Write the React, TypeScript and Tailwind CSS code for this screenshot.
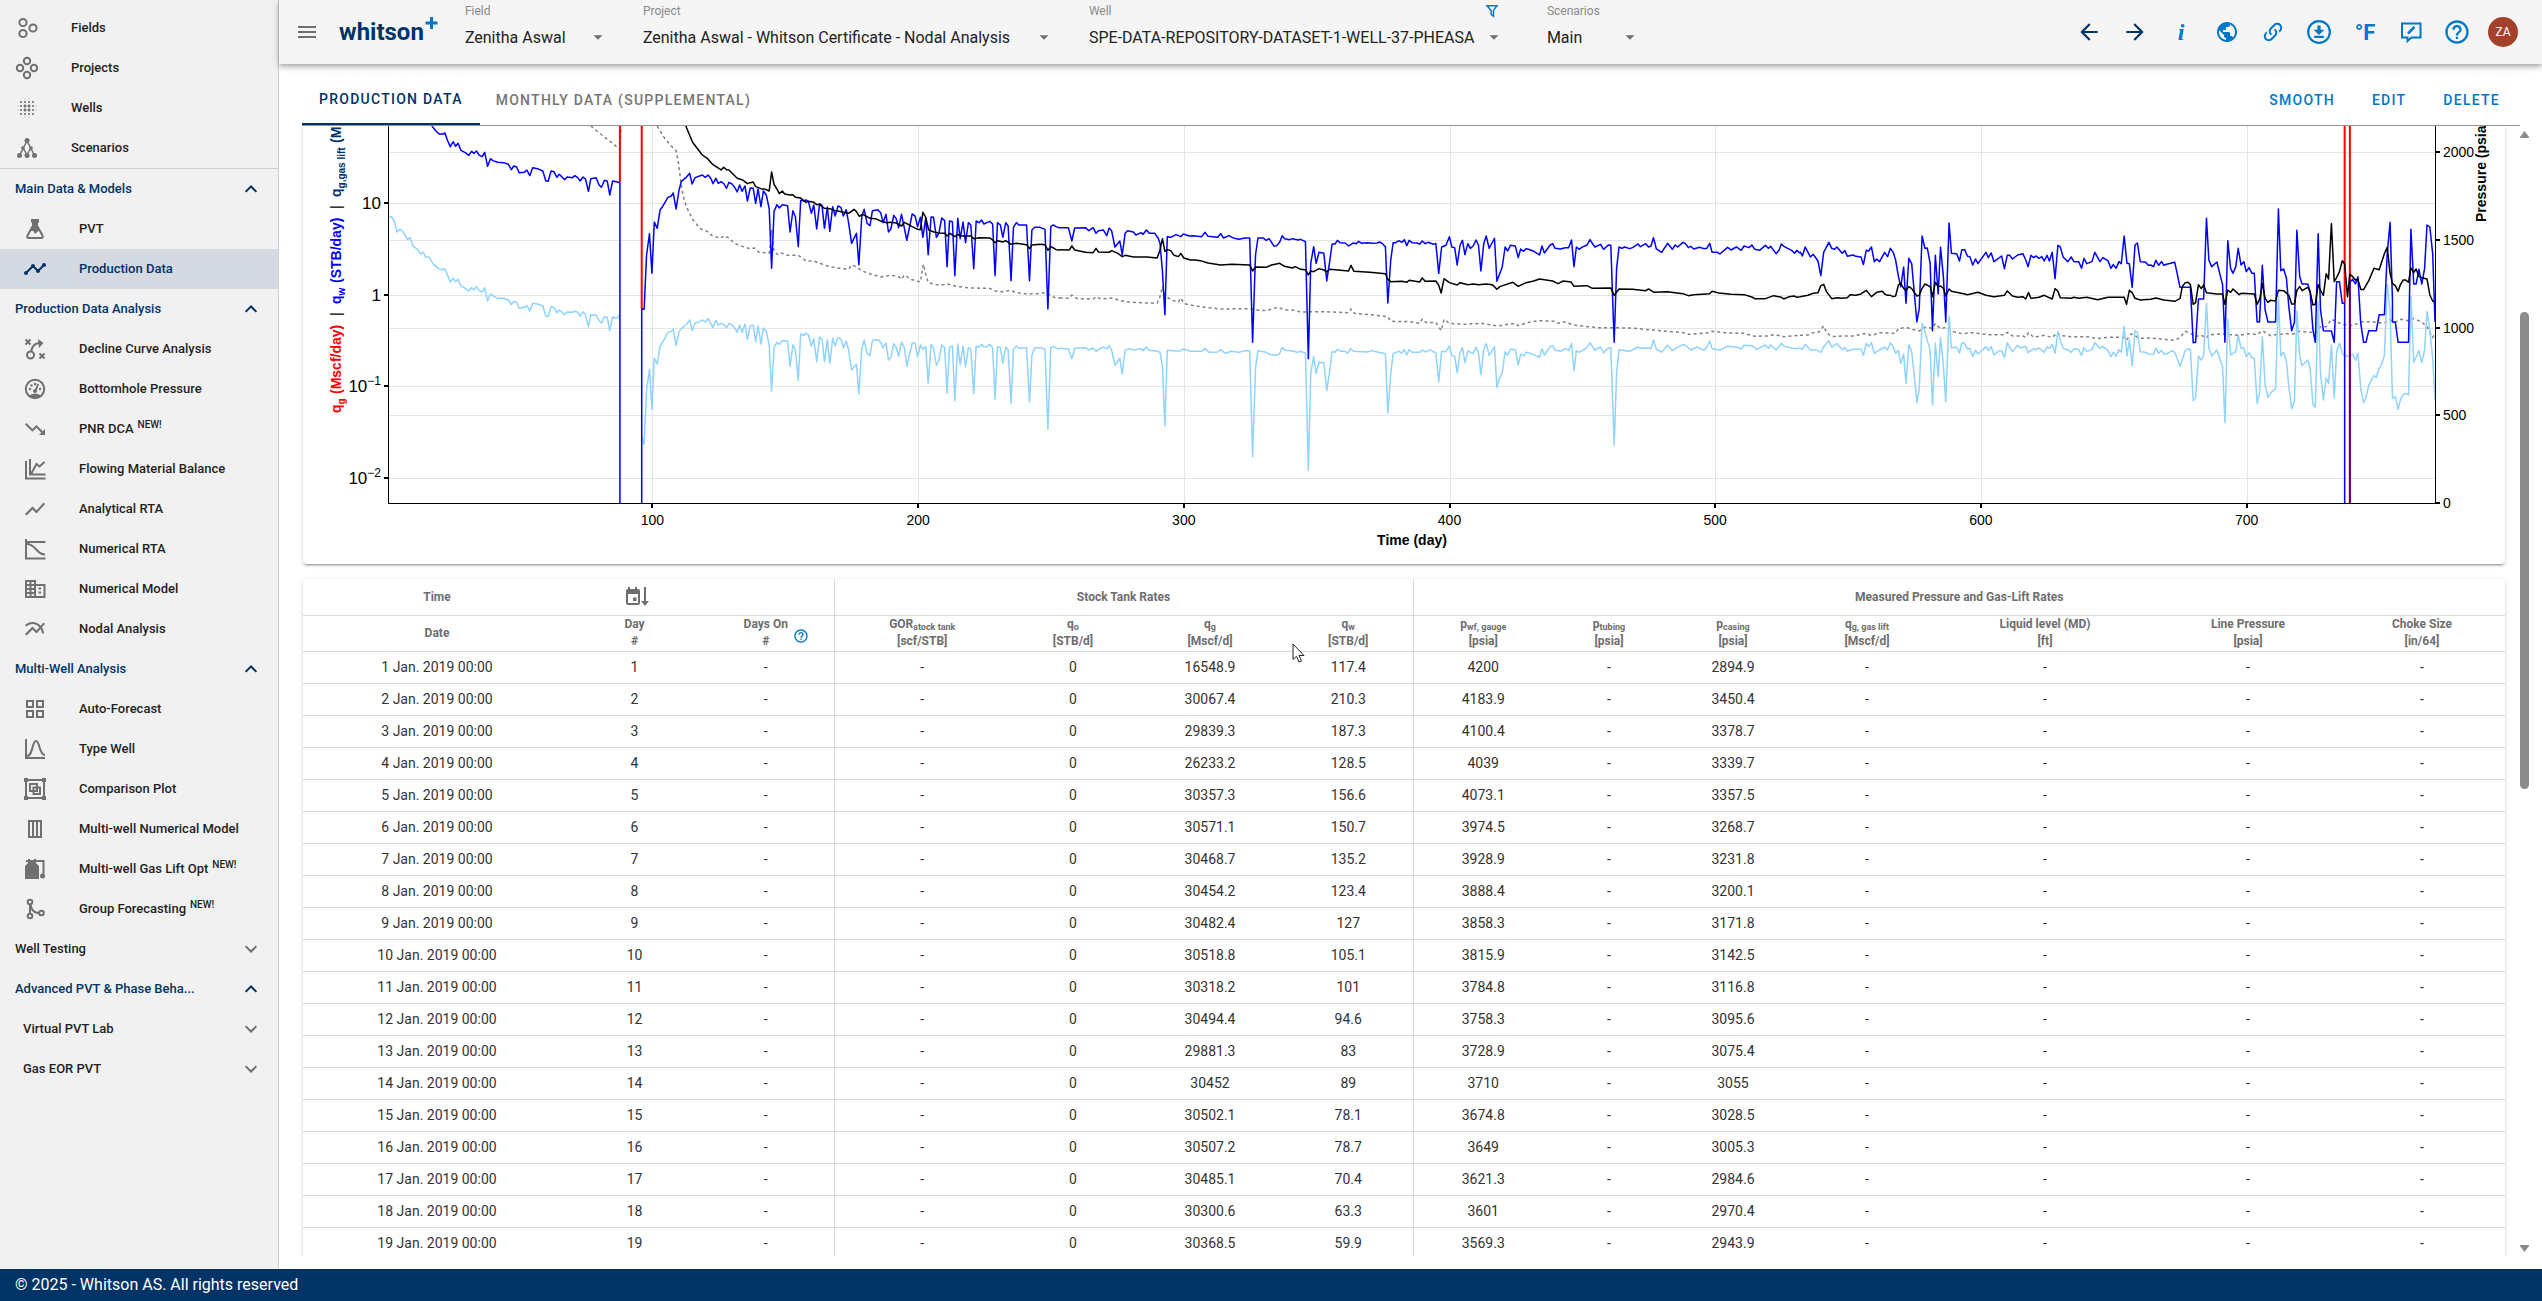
import type { ReactNode } from "react";
import {
  MdArrowBack,
  MdArrowDropDown,
  MdArrowForward,
  MdBlurOn,
  MdHelpOutline,
  MdMenu,
  MdMultilineChart,
  MdPublic,
  MdShowChart,
  MdTimeline,
  MdTrendingDown,
} from "react-icons/md";

/* ---------- icons ---------- */

function Icon({ children, size = 24 }: { children: ReactNode; size?: number }) {
  return (
    <svg width={size} height={size} viewBox="0 0 24 24" fill="none" stroke="currentColor" strokeWidth="2" aria-hidden="true">
      {children}
    </svg>
  );
}

const FieldsIcon = () => (
  <Icon>
    <circle cx="8" cy="6.5" r="3.6" />
    <circle cx="18" cy="12" r="3.6" />
    <circle cx="8" cy="17.5" r="3.6" />
  </Icon>
);

const ProjectsIcon = () => (
  <Icon>
    <circle cx="12" cy="5" r="3.2" />
    <circle cx="5" cy="12" r="3.2" />
    <circle cx="19" cy="12" r="3.2" />
    <circle cx="12" cy="19" r="3.2" />
  </Icon>
);

const ScenariosIcon = () => (
  <Icon>
    <path d="M12 5 8 12.500 4.500 19.500M12 5l4 7.500 3.500 7M8.500 12.500l3.500 6.500 3.500-6.500" strokeWidth="1.500" />
    <g fill="currentColor" stroke="none">
      <circle cx="12" cy="4.500" r="2.500" />
      <circle cx="8" cy="12" r="1.800" />
      <circle cx="16" cy="12" r="1.800" />
      <circle cx="4.500" cy="19.500" r="2.500" />
      <circle cx="12" cy="19.500" r="2.500" />
      <circle cx="19.500" cy="19.500" r="2.500" />
    </g>
  </Icon>
);

const FlaskIcon = () => (
  <Icon>
    <path d="M9 3h6M9.500 9.500 4.500 18.500Q3.500 21 6 21h12q2.500 0 1.500-2.500l-5-9" />
    <path d="M8 2h8v3l-1 1v5l1.500 2-4.500 4-1.500-3H8l1-4V6L8 5z" fill="currentColor" stroke="none" />
  </Icon>
);

const StrategyIcon = () => (
  <Icon>
    <path d="m2.500 2.500 5 5m0-5-5 5M16.500 16.500l5 5m0-5-5 5" />
    <circle cx="7.500" cy="18" r="3.500" />
    <path d="M8 14.500c1-5 4-8.500 9-8.500" />
    <path d="m15 2 5.500 4-4.500 5z" fill="currentColor" stroke="none" />
  </Icon>
);

const GaugeIcon = () => (
  <Icon>
    <circle cx="12" cy="12" r="9.200" />
    <path d="m12.500 14 2.500-7" />
    <g fill="currentColor" stroke="none">
      <circle cx="12" cy="14" r="2" />
      <circle cx="7" cy="12" r="1.200" />
      <circle cx="8.500" cy="8.500" r="1.200" />
      <circle cx="12" cy="7" r="1.200" />
      <circle cx="17" cy="12" r="1.200" />
      <path d="M5 19q7-5 14 0-7 5.500-14 0" />
    </g>
  </Icon>
);

const MaterialBalanceIcon = () => (
  <Icon>
    <path d="M3 4v17.500h19.500" />
    <path d="M7 2v15.500h15.500M8 17l5.500-10 3 2.500L21.500 5" />
  </Icon>
);

const NumericalRtaIcon = () => (
  <Icon>
    <path d="M3 2v19.500h19.500M3 5h19.500M4 7c9 0 9 10.500 18 10.500" />
  </Icon>
);

const NumericalModelIcon = () => (
  <Icon>
    <path d="M3 4h9v16H3zM12 8h9.500v12H12M3 8h9M3 12h9M3 16h9M7.500 4v16" />
    <path d="M15.500 11.500h2.500M15.500 15.500h2.500" />
  </Icon>
);

const GridIcon = () => (
  <Icon>
    <path d="M4 4h6v6H4zM14 4h6v6h-6zM4 14h6v6H4zM14 14h6v6h-6z" />
  </Icon>
);

const BellCurveIcon = () => (
  <Icon>
    <path d="M3 2v19h19M4 19c6 0 5-15 9-15s3 14 9 14" />
  </Icon>
);

const GroupIcon = () => (
  <Icon>
    <path d="M3 3h18v18H3zM7 7h7v7H7zM10.500 10.500h6.500v6.500h-6.500z" />
    <path d="M1 1h4v4H1zM19 1h4v4h-4zM1 19h4v4H1zM19 19h4v4h-4z" fill="currentColor" stroke="none" />
  </Icon>
);

const ColumnsIcon = () => (
  <Icon>
    <path d="M6 4h12v16H6zM10 4v16M14 4v16" />
  </Icon>
);

const GasLiftIcon = () => (
  <Icon>
    <path d="M2 22V9l3-3V5H3V3h2V2h2v1h4V2h2v1h8.500v14h-2V5H13v1l3 3v13z" fill="currentColor" stroke="none" />
    <circle cx="19.500" cy="19" r="2.500" fill="currentColor" stroke="none" />
  </Icon>
);

const GroupForecastIcon = () => (
  <Icon>
    <circle cx="7" cy="5" r="2.300" />
    <circle cx="7" cy="19" r="2.300" />
    <circle cx="18.500" cy="16" r="2.300" />
    <path d="M7 7.500v9M7.500 8c1 5 4 8 8.500 8" />
  </Icon>
);

const ChevronIcon = ({ open }: { open: boolean }) => (
  <Icon size={20}>
    <path d={open ? "m5.500 15.500 6.500-6.500 6.500 6.500" : "m5.500 8.500 6.500 6.500 6.500-6.500"} strokeWidth="2.400" />
  </Icon>
);

const LinkIcon = () => (
  <svg width="24" height="24" viewBox="0 0 24 24" fill="currentColor" aria-hidden="true">
    <path d="M10.590 13.410C11 13.800 11 14.440 10.590 14.830C10.200 15.220 9.560 15.220 9.170 14.830C7.220 12.880 7.220 9.710 9.170 7.760L12.710 4.220C14.660 2.270 17.830 2.270 19.780 4.220C21.730 6.170 21.730 9.340 19.780 11.290L18.290 12.780C18.300 11.960 18.170 11.140 17.890 10.360L18.360 9.880C19.540 8.710 19.540 6.810 18.360 5.640C17.190 4.460 15.290 4.460 14.120 5.640L10.590 9.170C9.410 10.340 9.410 12.240 10.590 13.410M13.410 9.170C13.800 8.780 14.440 8.780 14.830 9.170C16.780 11.120 16.780 14.290 14.830 16.240L11.290 19.780C9.340 21.730 6.170 21.730 4.220 19.780C2.270 17.830 2.270 14.660 4.220 12.710L5.710 11.220C5.700 12.040 5.830 12.860 6.110 13.650L5.640 14.120C4.460 15.290 4.460 17.190 5.640 18.360C6.810 19.540 8.710 19.540 9.880 18.360L13.410 14.830C14.590 13.660 14.590 11.760 13.410 10.590C13 10.200 13 9.560 13.410 9.170Z" />
  </svg>
);

const DownloadIcon = () => (
  <Icon size={26}>
    <circle cx="12" cy="12" r="10" />
    <path d="M7.500 16.500h9" />
    <path d="M10.500 6h3v4H17l-5 4.800L7 10h3.500z" fill="currentColor" stroke="none" />
  </Icon>
);

const FeedbackIcon = () => (
  <Icon>
    <path d="M3 3.500h18.500v14h-9L8.500 21v-3.500H3z" />
    <path d="m9 13.500 6.500-6.500" strokeWidth="2.500" />
  </Icon>
);

const FilterIcon = () => (
  <Icon size={14}>
    <path d="M3.500 3h17L14.500 11v10l-4-3v-7z" strokeWidth="2.500" />
  </Icon>
);

/* ---------- sidebar ---------- */

type NavItem = { label: string; icon: ReactNode; active?: boolean; isNew?: boolean };

const topItems: NavItem[] = [
  { label: "Fields", icon: <FieldsIcon /> },
  { label: "Projects", icon: <ProjectsIcon /> },
  { label: "Wells", icon: <MdBlurOn size={26} /> },
  { label: "Scenarios", icon: <ScenariosIcon /> },
];

const navGroups: { title: string; items: NavItem[] }[] = [
  {
    title: "Main Data & Models",
    items: [
      { label: "PVT", icon: <FlaskIcon /> },
      { label: "Production Data", icon: <MdTimeline size={24} />, active: true },
    ],
  },
  {
    title: "Production Data Analysis",
    items: [
      { label: "Decline Curve Analysis", icon: <StrategyIcon /> },
      { label: "Bottomhole Pressure", icon: <GaugeIcon /> },
      { label: "PNR DCA", icon: <MdTrendingDown size={24} />, isNew: true },
      { label: "Flowing Material Balance", icon: <MaterialBalanceIcon /> },
      { label: "Analytical RTA", icon: <MdShowChart size={24} /> },
      { label: "Numerical RTA", icon: <NumericalRtaIcon /> },
      { label: "Numerical Model", icon: <NumericalModelIcon /> },
      { label: "Nodal Analysis", icon: <MdMultilineChart size={24} /> },
    ],
  },
  {
    title: "Multi-Well Analysis",
    items: [
      { label: "Auto-Forecast", icon: <GridIcon /> },
      { label: "Type Well", icon: <BellCurveIcon /> },
      { label: "Comparison Plot", icon: <GroupIcon /> },
      { label: "Multi-well Numerical Model", icon: <ColumnsIcon /> },
      { label: "Multi-well Gas Lift Opt", icon: <GasLiftIcon />, isNew: true },
      { label: "Group Forecasting", icon: <GroupForecastIcon />, isNew: true },
    ],
  },
];

function NavLink({ item, nested }: { item: NavItem; nested?: boolean }) {
  return (
    <a
      href="#"
      className={`flex h-10 items-center gap-8 ${nested ? "pl-[23px]" : "pl-[15px]"} ${
        item.active ? "bg-[#d5d9e2] text-[#003366]" : "text-[#1f1f1f]"
      }`}
    >
      <span className={`flex w-6 justify-center ${item.active ? "" : "text-[#707070]"}`}>{item.icon}</span>
      <span className="flex gap-1">
        {item.label}
        {item.isNew && <span className="text-[10px] leading-3">NEW!</span>}
      </span>
    </a>
  );
}

function GroupButton({ title, open, nested }: { title: string; open: boolean; nested?: boolean }) {
  return (
    <button
      type="button"
      aria-expanded={open}
      className={`flex h-10 w-full items-center justify-between pr-[17px] font-medium ${nested ? "pl-[23px]" : "pl-[15px]"} ${
        open ? "text-[#003366]" : "text-[#1f1f1f]"
      }`}
    >
      {title}
      <span className={open ? "" : "text-[#707070]"}>
        <ChevronIcon open={open} />
      </span>
    </button>
  );
}

function Sidebar() {
  return (
    <aside className="w-[279px] shrink-0 border-r border-[#cfcfcf] bg-[#f1f1f1] pt-2 text-[13px] font-medium">
      <nav>
        <div className="border-b border-[#cfcfcf]">
          {topItems.map((item) => (
            <NavLink key={item.label} item={item} />
          ))}
        </div>
        {navGroups.map((group) => (
          <div key={group.title}>
            <GroupButton title={group.title} open />
            {group.items.map((item) => (
              <NavLink key={item.label} item={item} nested />
            ))}
          </div>
        ))}
        <GroupButton title="Well Testing" open={false} />
        <GroupButton title="Advanced PVT & Phase Beha..." open />
        <GroupButton title="Virtual PVT Lab" open={false} nested />
        <GroupButton title="Gas EOR PVT" open={false} nested />
      </nav>
    </aside>
  );
}

/* ---------- header ---------- */

function Picker({ id, label, value, className, filter }: { id: string; label: string; value: string; className: string; filter?: boolean }) {
  return (
    <div className={`relative shrink-0 ${className}`}>
      <div className="flex h-[22px] items-center justify-between">
        <label htmlFor={id} className="text-xs text-[#8a8a8a]">
          {label}
        </label>
        {filter && (
          <button type="button" aria-label="Filter wells" className="text-[#0077c8]">
            <FilterIcon />
          </button>
        )}
      </div>
      <select id={id} className="h-8 w-full appearance-none bg-transparent text-base text-[#222]">
        <option>{value}</option>
      </select>
      <MdArrowDropDown size={22} className="pointer-events-none absolute -right-1.5 bottom-1.5 text-[#707070]" />
    </div>
  );
}

const actions: { name: string; icon: ReactNode; className: string }[] = [
  { name: "Back", icon: <MdArrowBack size={26} />, className: "text-[#003366]" },
  { name: "Forward", icon: <MdArrowForward size={26} />, className: "text-[#003366]" },
  { name: "Info", icon: <span className="font-['Liberation_Serif',serif] text-2xl font-bold italic">i</span>, className: "text-[#0077c8]" },
  { name: "Language", icon: <MdPublic size={24} />, className: "text-[#0077c8]" },
  { name: "Copy link", icon: <LinkIcon />, className: "text-[#0077c8]" },
  { name: "Download", icon: <DownloadIcon />, className: "text-[#0077c8]" },
  { name: "Units", icon: <span className="text-[22px] font-bold">°F</span>, className: "text-[#0077c8]" },
  { name: "Feedback", icon: <FeedbackIcon />, className: "text-[#0077c8]" },
  { name: "Help", icon: <MdHelpOutline size={28} />, className: "text-[#0077c8]" },
];

function Header() {
  return (
    <header className="z-10 flex h-16 shrink-0 items-center bg-[#f5f5f5] pr-4 pl-4 shadow-[0_2px_4px_-1px_rgba(0,0,0,0.2),0_4px_5px_0_rgba(0,0,0,0.14),0_1px_10px_0_rgba(0,0,0,0.12)]">
      <button type="button" aria-label="Menu" className="text-[#707070]">
        <MdMenu size={24} />
      </button>
      <a href="#" className="ml-5 flex text-2xl font-bold text-[#003366]">
        whitson
        <svg width="14" height="14" viewBox="0 0 14 14" className="text-[#0077c8]" aria-hidden="true">
          <path d="M7.500 1v12M1.500 7h12" stroke="currentColor" strokeWidth="3" />
        </svg>
      </a>
      <div className="ml-[27px] flex gap-10 self-start">
        <Picker id="field" label="Field" value="Zenitha Aswal" className="w-[138px]" />
        <Picker id="project" label="Project" value="Zenitha Aswal - Whitson Certificate - Nodal Analysis" className="w-[406px]" />
        <Picker id="well" label="Well" value="SPE-DATA-REPOSITORY-DATASET-1-WELL-37-PHEASA" className="mr-2 w-[410px]" filter />
        <Picker id="scenario" label="Scenarios" value="Main" className="w-[88px]" />
      </div>
      <div className="ml-auto flex items-center">
        {actions.map((action) => (
          <button key={action.name} type="button" aria-label={action.name} className={`flex h-10 w-[46px] items-center justify-center ${action.className}`}>
            {action.icon}
          </button>
        ))}
        <button type="button" className="mx-2 size-[30px] rounded-full bg-[#a5402d] text-xs text-white">
          ZA
        </button>
      </div>
    </header>
  );
}

/* ---------- chart ---------- */

type Section = { transform: string; gas: string; casing: string; water: string; gauge: string; shutIn: string };

// Each section has its own drawing frame, placed by its transform.
const sections: Section[] = [
  {
    transform: "translate(300 110) scale(0.4847 0.3333)",
    gas: "M183,320 189,321 195,335 200,366 206,358 212,364 222,388 227,383 233,408 243,419 249,433 254,426 260,443 265,440 276,464 286,476 294,480 299,476 310,516 316,505 321,516 326,508 332,528 341,535 348,543 354,533 359,540 364,530 370,542 376,546 381,533 387,573 393,552 398,557 408,565 420,565 430,570 436,584 441,574 447,577 452,595 463,592 468,587 474,603 480,580 490,582 501,588 507,618 512,620 518,590 524,593 530,608 535,600 546,614 551,606 562,607 567,604 573,607 578,618 584,606 589,614 595,650 600,614 611,615 617,632 622,640 628,620 634,622 639,662 645,620 650,625 655,624 660,614M705,980 710,1003 715,840 721,778 726,898 731,744 737,762 743,708 748,697 759,668 766,664 770,658 776,706 782,665 787,656 796,645 804,630 809,662 815,639 822,637 830,630 836,636 842,626 848,641 852,653 858,631 863,645 869,640 875,645 880,653 885,640 891,645 896,652 902,667 907,645 912,668 918,642 923,688 929,647 935,646 940,695 945,648 951,702 956,654 962,664 968,706 973,843 978,713 984,697 989,703 995,692 1006,693 1011,769 1017,704 1022,720 1028,811 1033,672 1039,676 1044,670 1049,675 1055,709 1060,686 1066,755 1072,681 1077,687 1082,755 1088,690 1093,760 1099,685 1104,708 1110,683 1116,687 1121,713 1127,694 1132,721 1138,780 1148,763 1153,853 1159,717 1164,690 1170,731 1176,737 1181,691 1192,689 1198,697 1203,714 1209,699 1214,750 1219,742 1225,701 1230,712 1235,739 1241,697 1247,713 1252,769 1263,699 1269,699 1274,740 1280,705 1285,718 1291,710 1296,820 1302,703 1307,715 1313,766 1318,753 1324,705 1330,713 1335,850 1340,712 1346,708 1351,872 1357,702 1362,765 1368,708 1373,771 1379,713 1384,718 1390,851 1395,709 1401,711 1406,703 1411,711 1417,710 1423,703 1429,713 1434,868 1439,710 1445,713 1450,760 1456,711 1461,720 1467,880 1472,718 1478,708 1483,715 1494,713 1499,713 1505,877 1510,735 1516,713 1527,713 1537,718 1543,958 1549,713 1554,709 1560,714 1568,717",
    casing: "M600,48 620,72 645,100 660,118 662,48M737,48 750,80 764,105 776,122 781,160 786,220 790,255 797,290 810,328 825,355 840,364 850,377 868,385 874,377 885,384 896,400 918,412 930,417 938,414 946,426 968,430 973,360 978,425 986,434 993,429 1005,436 1028,436 1044,453 1060,453 1088,468 1104,473 1132,478 1138,465 1150,472 1160,483 1176,492 1198,501 1219,496 1236,500 1241,508 1247,495 1260,508 1280,516 1286,463 1296,518 1320,526 1335,522 1357,530 1384,534 1423,535 1434,543 1450,545 1466,541 1478,548 1499,552 1520,551 1537,548 1549,556 1560,565 1568,563",
    shutIn: "M660,48V216M705,48V598",
    water: "M272,48 280,62 287,72 295,72 299,69 304,90 310,110 316,95 321,109 326,100 332,121 341,128 348,136 354,124 359,130 364,123 370,136 376,140 381,127 387,169 393,146 398,152 408,157 420,158 430,163 436,179 441,168 447,171 452,188 463,187 468,180 474,197 480,173 490,176 501,183 507,212 512,214 518,183 524,185 530,202 535,193 546,209 551,201 562,203 567,197 573,203 578,213 584,201 589,207 595,244 600,206 611,203 617,225 622,232 628,211 634,214 639,255 645,213 655,216 660,218 660,1180M705,1180 705,598 710,598 715,435 721,371 726,490 731,336 737,355 743,299 748,290 759,262 766,258 770,249 776,297 782,240 787,214 796,203 804,190 809,222 815,203 830,195 836,202 842,195 848,206 852,221 858,205 863,220 869,215 875,222 880,235 885,217 891,222 896,230 902,246 907,225 912,244 918,228 923,273 929,234 935,235 940,280 945,237 951,290 956,243 962,255 968,296 973,475 978,305 984,284 989,294 995,284 1006,287 1011,366 1017,302 1022,320 1028,410 1033,271 1039,273 1044,270 1049,275 1055,310 1060,285 1066,357 1072,281 1077,287 1082,355 1088,291 1093,364 1099,290 1104,318 1110,288 1116,292 1121,318 1127,299 1132,340 1138,400 1148,370 1153,464 1159,320 1164,298 1170,340 1176,347 1181,302 1192,299 1198,308 1203,338 1209,313 1214,366 1219,357 1225,316 1230,326 1235,353 1241,313 1252,391 1263,312 1269,318 1274,350 1280,322 1285,382 1291,324 1296,434 1302,321 1307,322 1313,382 1318,370 1324,324 1330,332 1335,470 1340,333 1346,335 1351,497 1357,325 1362,386 1368,336 1373,398 1379,338 1384,345 1390,476 1395,333 1401,338 1406,330 1411,342 1417,338 1423,334 1429,342 1434,497 1439,338 1445,345 1450,382 1456,338 1461,348 1467,512 1472,352 1478,338 1483,345 1499,345 1505,512 1510,360 1516,352 1527,352 1537,358 1543,597 1549,350 1554,345 1560,350 1568,354",
    gauge: "M796,48 810,97 830,135 841,146 852,164 869,180 874,172 880,179 885,180 902,205 912,209 917,214 923,221 929,218 935,216 940,230 951,236 960,238 968,243 973,186 978,223 984,237 989,251 995,243 1000,252 1011,255 1017,254 1022,262 1033,264 1044,277 1049,274 1060,277 1066,284 1072,283 1082,295 1093,296 1104,302 1110,303 1121,307 1132,310 1143,298 1148,305 1154,319 1160,313 1165,316 1176,325 1187,326 1198,333 1209,338 1219,337 1230,339 1241,348 1247,337 1252,341 1263,350 1274,358 1280,359 1285,307 1291,322 1297,360 1308,366 1318,369 1330,370 1335,378 1341,370 1351,380 1357,373 1362,378 1384,378 1390,386 1401,383 1423,384 1429,390 1434,398 1440,392 1450,396 1456,392 1467,403 1478,400 1499,404 1505,416 1510,405 1527,403 1537,404 1543,421 1549,409 1560,419 1568,420",
  },
  {
    transform: "translate(1050 110) scale(0.4847 0.3333)",
    gas: "M20,715 38,717 45,746 51,715 73,713 80,720 89,714 95,724 100,718 110,711 117,717 122,707 127,720 134,765 144,745 149,792 155,720 165,716 172,720 188,716 192,722 199,711 205,721 222,724 227,727 232,770 237,947 242,721 260,723 270,722 275,717 290,724 313,724 320,716 328,727 346,726 352,719 362,730 374,724 390,727 402,722 412,722 418,1040 424,775 429,722 446,727 452,733 468,736 474,730 479,713 486,721 500,723 510,727 517,724 527,730 533,1080 538,790 544,740 549,790 555,757 565,758 571,842 577,785 582,725 588,727 593,718 600,724 609,724 614,730 620,716 626,724 654,726 665,722 675,726 692,731 697,909 703,790 708,731 720,724 726,729 731,719 736,735 741,719 747,727 763,727 768,720 774,726 785,720 791,726 796,727 802,815 808,724 817,725 824,708 829,737 835,739 840,788 846,727 851,713 856,758 862,723 873,731 879,711 884,728 889,794 895,717 900,701 906,736 917,710 922,833 927,805 933,789 939,725 944,735 950,717 960,719 966,765 971,732 977,738 982,727 993,731 1010,742 1015,716 1020,735 1032,710 1037,707 1042,720 1053,724 1063,716 1070,722 1076,700 1081,782 1086,722 1092,727 1108,713 1114,698 1124,720 1136,711 1142,729 1152,714 1157,713 1164,1005 1169,790 1174,719 1196,724 1213,711 1218,715 1235,714 1240,716 1245,690 1251,718 1262,726 1274,706 1284,722 1290,715 1306,704 1311,706 1322,720 1335,711 1349,721 1355,712 1361,693 1366,716 1382,720 1398,709 1416,711 1426,717 1432,706 1448,707 1458,718 1476,705 1482,715 1487,705 1498,720 1509,700 1514,709 1535,716 1547,714",
    casing: "M20,564 40,565 45,555 56,566 89,567 95,560 105,567 128,564 145,572 160,576 200,579 221,580 227,560 232,530 238,557 250,570 265,576 270,564 277,581 300,588 326,593 352,597 412,596 424,600 446,602 470,592 484,600 500,600 517,606 560,605 616,608 621,597 628,610 660,614 697,620 703,634 741,635 763,640 768,627 776,638 796,637 807,662 813,628 824,640 855,643 890,640 922,648 960,640 966,647 990,636 1010,632 1040,634 1048,640 1059,635 1081,645 1108,650 1130,653 1200,654 1240,660 1273,664 1306,668 1317,673 1355,669 1366,664 1400,669 1430,670 1454,679 1480,678 1495,674 1514,680 1547,676",
    shutIn: "",
    water: "M20,353 38,353 45,393 51,354 73,353 80,362 89,353 95,370 100,362 110,360 117,377 122,354 127,362 134,411 144,393 149,435 155,370 160,362 172,366 177,375 188,368 192,373 199,360 205,370 216,370 223,384 227,400 232,485 237,614 242,380 249,382 260,374 270,380 275,372 287,378 296,377 313,380 320,367 326,379 346,382 352,371 358,384 369,377 380,385 390,388 402,384 412,384 418,697 424,435 429,384 440,384 446,391 452,386 462,408 468,407 474,396 479,377 484,386 495,389 500,386 512,390 517,388 527,395 533,746 538,460 544,410 549,460 555,427 565,430 571,513 577,455 582,402 588,402 593,391 598,398 609,399 616,408 626,399 632,401 637,394 643,400 654,398 665,400 675,399 680,396 686,401 692,410 697,579 703,450 708,398 713,398 720,392 726,397 731,389 736,407 741,391 747,398 757,399 763,402 768,393 774,401 780,397 791,403 796,400 802,490 808,411 817,406 824,380 829,411 835,413 840,465 846,405 851,391 856,434 862,401 867,415 873,408 879,390 884,405 889,483 895,400 900,378 906,415 912,399 917,385 922,514 933,471 939,411 944,423 950,406 960,408 966,443 971,417 977,424 982,416 987,418 998,424 1010,435 1015,408 1020,429 1032,405 1037,401 1042,415 1053,417 1063,413 1070,413 1076,390 1081,470 1086,411 1092,418 1097,412 1108,405 1114,389 1119,400 1124,411 1136,403 1142,418 1152,405 1157,406 1164,697 1169,475 1174,411 1180,415 1185,411 1196,416 1202,413 1213,402 1218,410 1229,401 1235,411 1240,408 1245,383 1251,417 1262,427 1274,400 1284,418 1290,405 1295,411 1306,397 1311,401 1317,413 1322,409 1328,417 1340,412 1349,416 1355,415 1361,400 1366,427 1377,427 1382,432 1398,412 1405,420 1416,411 1426,421 1432,408 1442,413 1448,405 1454,418 1464,421 1476,406 1482,415 1487,409 1498,431 1504,421 1509,402 1514,409 1530,421 1536,430 1541,421 1547,430",
    gauge: "M20,419 40,420 45,408 51,420 73,427 89,428 95,415 100,426 122,427 127,422 140,430 149,440 155,436 172,441 200,441 221,444 227,420 232,386 237,424 242,419 249,422 256,436 265,440 270,430 276,444 290,450 300,450 310,452 326,459 352,465 375,463 412,465 418,483 424,471 446,472 457,465 474,460 484,469 500,474 506,470 517,478 527,479 533,495 538,483 544,485 555,476 565,480 571,486 577,478 616,483 621,466 627,484 660,487 692,491 697,508 703,515 726,514 736,517 741,511 763,516 768,504 774,514 796,513 802,526 807,549 813,506 824,518 840,525 846,518 862,524 873,522 884,524 900,522 912,524 917,530 922,538 928,530 955,517 966,529 982,518 998,513 1010,507 1037,513 1048,521 1059,513 1075,516 1081,529 1108,527 1119,535 1157,534 1164,556 1174,537 1202,538 1229,542 1235,537 1246,547 1273,545 1306,551 1317,557 1328,554 1361,551 1366,544 1380,549 1405,553 1432,554 1448,561 1454,566 1476,566 1493,557 1509,562 1514,567 1525,560 1535,558 1541,562 1547,560",
  },
  {
    transform: "translate(1800 110) scale(0.4732 0.3333)",
    gas: "M0,714 5,718 11,703 22,720 33,719 44,727 50,710 61,692 67,712 78,701 90,719 95,713 100,724 112,718 129,718 134,736 140,700 145,709 151,698 157,730 168,720 179,711 185,720 191,699 197,710 202,730 208,722 213,760 219,733 224,820 230,704 236,725 241,790 247,878 252,838 258,640 264,665 275,722 280,885 286,700 292,800 297,683 303,765 308,875 315,618 320,714 331,711 337,730 342,698 348,700 354,717 359,715 365,740 371,721 376,732 393,710 398,722 404,710 410,735 421,722 426,722 432,743 438,698 443,712 449,725 460,706 466,714 477,709 482,728 494,716 499,720 505,714 516,727 522,711 527,715 533,703 539,730 545,665 550,690 556,715 566,720 573,727 579,716 589,719 595,736 600,713 606,725 617,719 623,698 634,715 640,709 651,722 657,740 662,727 668,739 674,719 679,727 685,648 691,738 696,690 702,768 708,662 713,667 719,725 730,727 736,732 747,733 752,714 758,730 764,721 769,732 775,732 786,722 792,727 803,769 814,722 820,717 825,718 831,872 836,864 842,739 848,750 853,736 859,580 864,715 870,738 881,720 893,770 898,938 904,628 910,735 915,730 921,725 926,675 932,715 938,714 943,740 949,728 955,744 960,745 966,879 971,850 977,680 983,825 989,862 994,850 1005,836 1011,560 1016,738 1022,727 1028,755 1033,830 1039,896 1045,872 1050,603 1056,738 1061,767 1073,750 1078,775 1084,884 1089,892 1095,575 1100,790 1106,870 1112,804 1117,820 1123,705 1129,865 1134,725 1140,700 1146,730 1151,738 1162,738 1168,733 1174,751 1179,730 1185,835 1191,878 1196,864 1202,826 1207,812 1213,797 1218,802 1224,775 1230,760 1235,735 1241,523 1247,600 1252,865 1258,860 1264,898 1269,868 1275,854 1280,850 1286,855 1291,560 1297,757 1308,722 1314,758 1320,720 1325,605 1331,660 1337,745 1342,870",
    casing: "M0,676 17,675 28,668 40,666 50,648 56,668 67,680 89,678 112,678 140,670 151,677 168,668 202,670 208,656 224,652 236,658 252,663 264,652 280,655 286,641 297,656 308,652 320,664 342,671 365,668 398,674 432,674 438,667 449,678 471,678 477,682 483,668 494,682 516,676 533,682 545,668 550,677 573,680 606,680 629,686 651,682 685,682 690,690 700,672 719,685 741,684 792,691 803,683 814,664 825,670 836,680 847,675 859,684 864,674 893,672 926,676 950,671 966,674 977,662 994,677 1011,673 1028,671 1045,671 1056,664 1078,667 1089,669 1100,650 1112,650 1123,628 1134,635 1146,643 1162,647 1179,641 1190,635 1213,636 1235,640 1246,629 1258,637 1269,628 1286,632 1297,625 1314,637 1325,650 1337,683 1342,670",
    shutIn: "M1151,48V580M1162,48V1180",
    water: "M0,425 5,438 11,411 22,441 28,433 38,453 44,497 50,427 61,397 67,415 73,418 78,411 89,430 95,422 100,439 112,435 118,439 129,441 134,464 140,421 145,423 151,411 157,455 162,447 168,455 179,427 185,440 191,415 197,427 202,450 208,500 213,530 219,471 224,580 230,445 236,461 241,540 247,636 252,595 258,378 264,415 269,414 275,460 280,662 286,436 292,552 297,412 303,500 308,636 315,339 320,430 331,431 337,453 342,419 348,419 354,439 359,440 365,465 371,447 376,461 393,427 398,443 404,429 410,455 426,438 432,476 438,436 443,436 449,447 460,435 471,431 477,450 482,470 488,436 494,443 499,438 505,445 511,440 516,453 522,436 527,453 533,427 539,506 545,406 550,411 556,441 566,455 573,441 579,455 589,455 595,475 600,445 606,461 617,455 623,427 634,455 640,443 651,453 657,475 662,464 668,475 674,455 679,461 685,378 691,460 696,461 702,532 708,405 713,399 719,455 730,456 736,466 741,465 747,470 752,451 758,466 764,455 769,466 775,463 792,457 797,490 803,532 825,532 831,698 836,697 842,567 853,567 859,325 864,450 870,470 881,456 887,490 893,524 898,697 904,392 910,475 915,490 921,470 926,415 932,465 938,455 943,485 949,473 955,490 960,490 966,636 971,636 977,466 983,600 989,636 1005,636 1011,297 1016,482 1022,477 1028,505 1033,590 1039,662 1045,636 1050,361 1056,500 1061,522 1073,522 1078,545 1084,660 1089,697 1095,371 1100,600 1106,662 1123,663 1129,697 1134,515 1140,515 1146,580 1151,580 1151,1180M1162,1180 1162,530 1162,517 1168,508 1174,522 1179,500 1185,640 1191,697 1196,697 1202,662 1218,662 1224,614 1235,614 1241,430 1247,337 1252,570 1252,636 1258,636 1264,697 1286,697 1291,358 1297,522 1302,522 1308,478 1314,522 1320,475 1325,345 1331,351 1337,430 1342,636",
    gauge: "M0,560 17,556 28,550 38,548 44,527 50,523 56,545 67,566 78,563 89,565 100,563 106,554 118,556 129,552 140,541 151,560 162,547 174,544 179,552 185,556 191,556 197,560 202,558 208,525 213,520 219,535 224,541 230,530 236,536 247,558 252,556 258,535 264,522 275,530 280,560 286,517 292,530 297,528 303,535 308,558 315,537 320,544 348,552 354,554 376,547 393,556 410,560 432,556 438,543 449,558 460,562 471,560 477,567 483,548 488,565 505,562 516,556 533,567 539,536 545,544 550,563 573,565 579,562 589,565 606,562 629,569 651,562 685,562 690,583 696,541 702,548 708,565 719,570 741,568 752,564 769,570 792,574 803,566 808,530 814,518 820,517 825,524 831,583 836,578 842,524 848,536 853,525 859,548 881,552 893,552 898,583 904,540 910,547 915,537 928,554 932,550 960,552 966,583 972,565 977,520 983,565 989,577 994,571 1005,573 1011,541 1022,542 1033,556 1039,582 1045,582 1050,541 1056,530 1061,542 1073,532 1078,545 1084,585 1089,583 1095,524 1100,541 1106,556 1112,491 1117,507 1123,341 1129,515 1134,503 1140,485 1146,452 1151,462 1157,560 1162,492 1168,500 1174,510 1179,508 1185,538 1191,539 1202,512 1213,475 1224,479 1235,431 1241,412 1247,490 1252,520 1258,527 1264,544 1269,523 1275,510 1280,510 1286,517 1291,474 1297,488 1302,477 1308,500 1314,503 1325,507 1331,555 1337,573 1342,577",
  },
];

const dayTicks = [100, 200, 300, 400, 500, 600, 700].map((day) => ({ day, x: 652.4 + (day - 100) * 2.657 }));
const rateTicks = [
  { base: "10", exp: "", y: 203 },
  { base: "1", exp: "", y: 295 },
  { base: "10", exp: "−1", y: 386 },
  { base: "10", exp: "−2", y: 478 },
];
const pressureTicks = [
  { label: "2000", y: 152 },
  { label: "1500", y: 240 },
  { label: "1000", y: 328 },
  { label: "500", y: 415 },
  { label: "0", y: 503 },
];

function ProductionChart() {
  return (
    <svg viewBox="303 126 2202 438" className="block w-full" fontFamily="'Liberation Sans', Arial, sans-serif" fontSize="14" role="img" aria-label="Production data against time">
      <g stroke="#e5e5e5" strokeWidth="1">
        {dayTicks.map((t) => (
          <line key={t.day} x1={Math.round(t.x) + 0.5} x2={Math.round(t.x) + 0.5} y1="126" y2="503" />
        ))}
        {[...rateTicks, ...pressureTicks].map((t) => (
          <line key={t.y} x1="389" x2="2435" y1={t.y + 0.5} y2={t.y + 0.5} />
        ))}
      </g>

      {sections.map((s) => (
        <g key={s.transform} transform={s.transform} fill="none" strokeWidth="1.500" strokeLinejoin="round">
          <path d={s.casing} stroke="#808080" strokeDasharray="3 3" vectorEffect="non-scaling-stroke" />
          <path d={s.gas} stroke="#8fd3ff" vectorEffect="non-scaling-stroke" />
          <path d={s.shutIn} stroke="#ff0000" strokeWidth="2" vectorEffect="non-scaling-stroke" />
          <path d={s.water} stroke="#0000ff" vectorEffect="non-scaling-stroke" />
          <path d={s.gauge} stroke="#000" vectorEffect="non-scaling-stroke" />
        </g>
      ))}

      <path d="M388.500 126V503.500H2435.500V126" fill="none" stroke="#000" shapeRendering="crispEdges" />
      {dayTicks.map((t) => (
        <g key={t.day}>
          <path d={`M${Math.round(t.x)} 503v5`} stroke="#000" strokeWidth="2" />
          <text x={t.x} y="525" textAnchor="middle">
            {t.day}
          </text>
        </g>
      ))}
      {rateTicks.map((t) => (
        <g key={t.y}>
          <path d={`M384 ${t.y}h5`} stroke="#000" strokeWidth="2" />
          <text x="381" y={t.y + 6} textAnchor="end" fontSize="17">
            {t.base}
            {t.exp && (
              <tspan dy="-7" fontSize="12">
                {t.exp}
              </tspan>
            )}
          </text>
        </g>
      ))}
      {pressureTicks.map((t) => (
        <g key={t.y}>
          <path d={`M2435 ${t.y}h5`} stroke="#000" strokeWidth="2" />
          <text x="2443" y={t.y + 5}>
            {t.label}
          </text>
        </g>
      ))}

      <text x="1412" y="545" textAnchor="middle" fontWeight="bold">
        Time (day)
      </text>
      <g transform="translate(341 413) rotate(-90)" fontWeight="bold">
        <text fill="#ff0000">
          q<tspan dy="4" fontSize="10">g</tspan>
          <tspan x="19" dy="-4">(Mscf/day)</tspan>
        </text>
        <text x="97" fontWeight="normal">|</text>
        <text x="109" fill="#0000ff">
          q<tspan dy="4" fontSize="10">w</tspan>
          <tspan x="130" dy="-4">(STB/day)</tspan>
        </text>
        <text x="204" fontWeight="normal">|</text>
        <text x="216" fill="#003366">
          q<tspan dy="4" fontSize="10">g,gas lift</tspan>
          <tspan x="270" dy="-4">(M</tspan>
        </text>
      </g>
      <text transform="translate(2486 222) rotate(-90)" fontWeight="bold">
        Pressure (psia
      </text>
    </svg>
  );
}

/* ---------- table ---------- */

type Column = { name: ReactNode; unit?: string; className: string; divider?: boolean };

const columns: Column[] = [
  { name: "Date", className: "w-[268px]" },
  { name: "Day", unit: "#", className: "w-[127px]" },
  { name: "Days On", unit: "#", className: "w-[136px]", divider: true },
  { name: <>GOR<Sub>stock tank</Sub></>, unit: "[scf/STB]", className: "w-[176px]" },
  { name: <>q<Sub>o</Sub></>, unit: "[STB/d]", className: "w-[126px]" },
  { name: <>q<Sub>g</Sub></>, unit: "[Mscf/d]", className: "w-[148px]" },
  { name: <>q<Sub>w</Sub></>, unit: "[STB/d]", className: "w-[129px]", divider: true },
  { name: <>p<Sub>wf, gauge</Sub></>, unit: "[psia]", className: "w-[140px]" },
  { name: <>p<Sub>tubing</Sub></>, unit: "[psia]", className: "w-[112px]" },
  { name: <>p<Sub>casing</Sub></>, unit: "[psia]", className: "w-[136px]" },
  { name: <>q<Sub>g, gas lift</Sub></>, unit: "[Mscf/d]", className: "w-[132px]" },
  { name: "Liquid level (MD)", unit: "[ft]", className: "w-[224px]" },
  { name: "Line Pressure", unit: "[psia]", className: "w-[182px]" },
  { name: "Choke Size", unit: "[in/64]", className: "w-[166px]" },
];

// gas rate, water rate, bottomhole gauge pressure, casing pressure
const readings = [
  ["16548.9", "117.4", "4200", "2894.9"],
  ["30067.4", "210.3", "4183.9", "3450.4"],
  ["29839.3", "187.3", "4100.4", "3378.7"],
  ["26233.2", "128.5", "4039", "3339.7"],
  ["30357.3", "156.6", "4073.1", "3357.5"],
  ["30571.1", "150.7", "3974.5", "3268.7"],
  ["30468.7", "135.2", "3928.9", "3231.8"],
  ["30454.2", "123.4", "3888.4", "3200.1"],
  ["30482.4", "127", "3858.3", "3171.8"],
  ["30518.8", "105.1", "3815.9", "3142.5"],
  ["30318.2", "101", "3784.8", "3116.8"],
  ["30494.4", "94.6", "3758.3", "3095.6"],
  ["29881.3", "83", "3728.9", "3075.4"],
  ["30452", "89", "3710", "3055"],
  ["30502.1", "78.1", "3674.8", "3028.5"],
  ["30507.2", "78.7", "3649", "3005.3"],
  ["30485.1", "70.4", "3621.3", "2984.6"],
  ["30300.6", "63.3", "3601", "2970.4"],
  ["30368.5", "59.9", "3569.3", "2943.9"],
];

function Sub({ children }: { children: ReactNode }) {
  return <sub className="text-[9px]">{children}</sub>;
}

function SortByDateIcon() {
  return (
    <svg width="24" height="20" viewBox="0 0 24 20" fill="currentColor" aria-hidden="true">
      <path fillRule="evenodd" d="M3 0h2v2h5V0h2v2h1q2 0 2 2v12q0 2-2 2H3q-2 0-2-2V4q0-2 2-2zM3 7v9h10V7zM8 10.500h3.500V14H8zM19 0h2v14h3l-4 5-4-5h3z" />
    </svg>
  );
}

function ProductionTable() {
  return (
    <table className="w-full table-fixed border-collapse text-center text-sm text-[#333]">
      <colgroup>
        {columns.map((col, i) => (
          <col key={i} className={col.className} />
        ))}
      </colgroup>
      <thead className="text-xs text-[#6e6e6e]">
        <tr className="h-9 border-b border-[#dcdcdc]">
          <th scope="col">Time</th>
          <th scope="col" className="p-0">
            <button type="button" aria-label="Sort by date" className="ml-1 align-middle">
              <SortByDateIcon />
            </button>
          </th>
          <th className="border-r border-[#dcdcdc]" />
          <th scope="colgroup" colSpan={4} className="border-r border-[#dcdcdc]">
            Stock Tank Rates
          </th>
          <th scope="colgroup" colSpan={7}>
            Measured Pressure and Gas-Lift Rates
          </th>
        </tr>
        <tr className="h-9 border-b border-[#dcdcdc]">
          {columns.map((col, i) => (
            <th key={i} scope="col" className={`relative p-0 leading-[17px] ${col.divider ? "border-r border-[#dcdcdc]" : ""}`}>
              {col.name}
              {col.unit && <div>{col.unit}</div>}
              {col.name === "Days On" && (
                <button type="button" aria-label="About days on" className="absolute top-3 right-[25px] text-[#0077c8]">
                  <MdHelpOutline size={16} />
                </button>
              )}
            </th>
          ))}
        </tr>
      </thead>
      <tbody>
        {readings.map(([gas, water, gauge, casing], i) => {
          const cells = [`${i + 1} Jan. 2019 00:00`, i + 1, "-", "-", "0", gas, water, gauge, "-", casing, "-", "-", "-", "-"];
          return (
            <tr key={i} className="h-8 border-b border-[#dcdcdc]">
              {cells.map((cell, c) => (
                <td key={c} className={`p-0 ${columns[c].divider ? "border-r border-[#dcdcdc]" : ""}`}>
                  {cell}
                </td>
              ))}
            </tr>
          );
        })}
      </tbody>
    </table>
  );
}

/* ---------- page ---------- */

const cardShadow = "shadow-[0_3px_1px_-2px_rgba(0,0,0,0.2),0_2px_2px_0_rgba(0,0,0,0.14),0_1px_5px_0_rgba(0,0,0,0.12)]";

function TabBar() {
  return (
    <div className="mr-[22px] ml-[23px] flex h-[62px] shrink-0 items-end border-b border-[#949494] text-sm font-medium tracking-[0.09em]">
      <button type="button" role="tab" aria-selected="true" className="h-[50px] border-b-2 border-[#003366] px-[17px] text-[#003366]">
        PRODUCTION DATA
      </button>
      <button type="button" role="tab" aria-selected="false" className="h-[50px] px-4 text-[#757575]">
        MONTHLY DATA (SUPPLEMENTAL)
      </button>
      <div className="ml-auto flex h-[50px] items-center gap-[37px] pr-5 text-[#0077c8]">
        <button type="button">SMOOTH</button>
        <button type="button">EDIT</button>
        <button type="button">DELETE</button>
      </div>
    </div>
  );
}

function ScrollRail() {
  return (
    <div className="mr-[13px] ml-[15px] flex w-[9px] shrink-0 flex-col text-[#8b8b8b]">
      <svg width="9" height="7" viewBox="0 0 9 7" className="mt-[5px]" aria-hidden="true">
        <path d="M4.500 0 9 6v1H0V6z" fill="currentColor" />
      </svg>
      <div className="mt-[174px] h-[477px] rounded-full bg-[#8b8b8b]" />
      <svg width="9" height="7" viewBox="0 0 9 7" className="mt-auto mb-1" aria-hidden="true">
        <path d="M4.500 7 0 1V0h9v1z" fill="currentColor" />
      </svg>
    </div>
  );
}

export default function App() {
  return (
    <div className="flex h-screen flex-col overflow-hidden bg-white font-[Roboto,sans-serif]">
      <div className="flex min-h-0 flex-1">
        <Sidebar />
        <main className="relative flex min-w-0 flex-1 flex-col pb-[13px]">
          <Header />
          <TabBar />
          <div className="flex min-h-0 flex-1 overflow-hidden pl-6">
            <div className="min-w-0 flex-1">
              <section className={`rounded-b ${cardShadow}`}>
                <ProductionChart />
              </section>
              <section className={`mt-[15px] rounded ${cardShadow}`}>
                <ProductionTable />
              </section>
            </div>
            <ScrollRail />
          </div>
          <svg width="14" height="20" viewBox="0 0 14 20" className="absolute top-[643px] left-[1013px]" aria-hidden="true">
            <path d="M1 1v15.500l3.500-3.300 2.500 5.800 2.500-1-2.400-5.500H12z" fill="#fff" stroke="#222" />
          </svg>
        </main>
      </div>
      <footer className="flex h-8 shrink-0 items-center bg-[#003366] pl-[15px] text-base text-white">© 2025 - Whitson AS. All rights reserved</footer>
    </div>
  );
}
